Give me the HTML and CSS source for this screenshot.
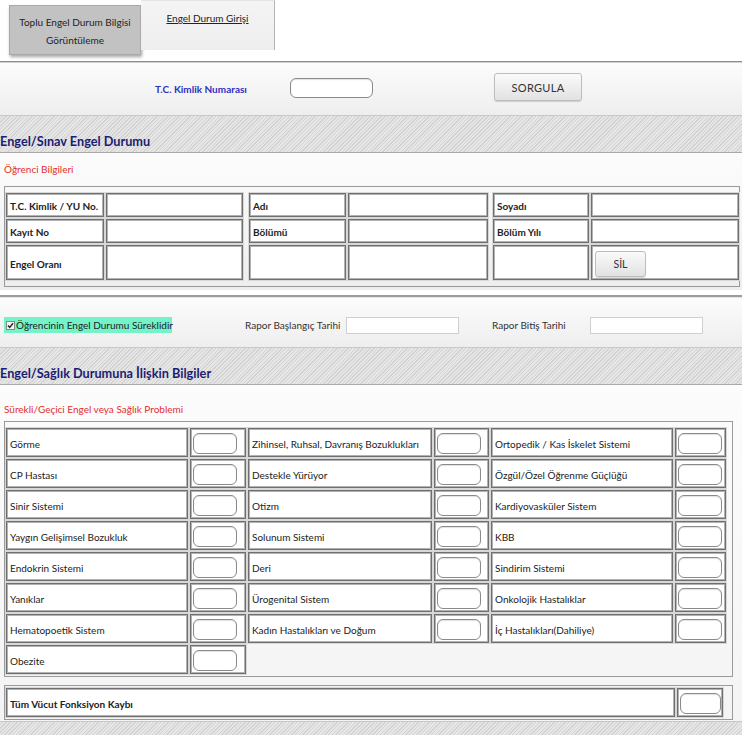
FILE: index.html
```html
<!DOCTYPE html>
<html lang="tr">
<head>
<meta charset="utf-8">
<title>Engel Durum Girişi</title>
<link rel="stylesheet" href="styles.css">
</head>
<body>
<div class="tabs">
  <div class="tab tab-a">Toplu Engel Durum Bilgisi<br>Görüntüleme</div>
  <div class="tab tab-b"><span class="ul">Engel Durum Girişi</span></div>
</div>

<div class="panel search">
  <span class="tc-label">T.C. Kimlik Numarası</span>
  <span class="round-input wide"></span>
  <span class="btn sorgula">SORGULA</span>
</div>

<div class="band"><h2>Engel/Sınav Engel Durumu</h2></div>

<div class="panel student">
  <div class="legend">Öğrenci Bilgileri</div>
  <div class="box">
    <div class="sgrid">
      <div class="c b">T.C. Kimlik / YU No.</div><div class="c"></div>
      <div class="c b g2">Adı</div><div class="c"></div>
      <div class="c b g3">Soyadı</div><div class="c"></div>
      <div class="c b">Kayıt No</div><div class="c"></div>
      <div class="c b g2">Bölümü</div><div class="c"></div>
      <div class="c b g3">Bölüm Yılı</div><div class="c"></div>
      <div class="c b">Engel Oranı</div><div class="c"></div>
      <div class="c g2"></div><div class="c"></div>
      <div class="c g3"></div><div class="c btn-cell"><span class="btn sil">SİL</span></div>
    </div>
  </div>
</div>

<div class="panel report">
  <span class="check-label"><svg class="chk" width="9" height="9" viewBox="0 0 9 9"><rect x="0.5" y="0.5" width="8" height="8" fill="#f4f4f4" stroke="#8a8a8a"/><path d="M2 4.6 L3.7 6.4 L7 2.3" fill="none" stroke="#222" stroke-width="1.4"/></svg>Öğrencinin Engel Durumu Süreklidir</span>
  <span class="rl rl1">Rapor Başlangıç Tarihi</span>
  <span class="date-input"></span>
  <span class="rl rl2">Rapor Bitiş Tarihi</span>
  <span class="date-input"></span>
</div>

<div class="band"><h2>Engel/Sağlık Durumuna İlişkin Bilgiler</h2></div>

<div class="panel health">
  <div class="legend">Sürekli/Geçici Engel veya Sağlık Problemi</div>
  <div class="box hbox">
    <div class="hgrid">
      <div class="c">Görme</div><div class="c"><span class="round-input"></span></div>
      <div class="c">Zihinsel, Ruhsal, Davranış Bozuklukları</div><div class="c"><span class="round-input"></span></div>
      <div class="c">Ortopedik / Kas İskelet Sistemi</div><div class="c"><span class="round-input"></span></div>

      <div class="c">CP Hastası</div><div class="c"><span class="round-input"></span></div>
      <div class="c">Destekle Yürüyor</div><div class="c"><span class="round-input"></span></div>
      <div class="c">Özgül/Özel Öğrenme Güçlüğü</div><div class="c"><span class="round-input"></span></div>

      <div class="c">Sinir Sistemi</div><div class="c"><span class="round-input"></span></div>
      <div class="c">Otizm</div><div class="c"><span class="round-input"></span></div>
      <div class="c">Kardiyovasküler Sistem</div><div class="c"><span class="round-input"></span></div>

      <div class="c">Yaygın Gelişimsel Bozukluk</div><div class="c"><span class="round-input"></span></div>
      <div class="c">Solunum Sistemi</div><div class="c"><span class="round-input"></span></div>
      <div class="c">KBB</div><div class="c"><span class="round-input"></span></div>

      <div class="c">Endokrin Sistemi</div><div class="c"><span class="round-input"></span></div>
      <div class="c">Deri</div><div class="c"><span class="round-input"></span></div>
      <div class="c">Sindirim Sistemi</div><div class="c"><span class="round-input"></span></div>

      <div class="c">Yanıklar</div><div class="c"><span class="round-input"></span></div>
      <div class="c">Ürogenital Sistem</div><div class="c"><span class="round-input"></span></div>
      <div class="c">Onkolojik Hastalıklar</div><div class="c"><span class="round-input"></span></div>

      <div class="c">Hematopoetik Sistem</div><div class="c"><span class="round-input"></span></div>
      <div class="c">Kadın Hastalıkları ve Doğum</div><div class="c"><span class="round-input"></span></div>
      <div class="c">İç Hastalıkları(Dahiliye)</div><div class="c"><span class="round-input"></span></div>

      <div class="c">Obezite</div><div class="c"><span class="round-input"></span></div>
    </div>
  </div>
  <div class="box tbox">
    <div class="tgrid">
      <div class="c b">Tüm Vücut Fonksiyon Kaybı</div><div class="c"><span class="round-input"></span></div>
    </div>
  </div>
</div>

<div class="band tail"></div>
</body>
</html>
```
FILE: styles.css
```css
* { box-sizing: border-box; }

body {
  margin: 0;
  width: 742px;
  background: #ffffff;
  font-family: Lato, "Open Sans", sans-serif;
  font-size: 10px;
  color: #222;
  overflow: hidden;
}

/* tabs */
.tabs {
  height: 62px;
  display: flex;
  align-items: flex-start;
  padding-left: 9px;
  border-bottom: 1px solid #8e8e8e;
  box-shadow: 0 1px 0 #d0d0d0;
}
.tab {
  text-align: center;
  font-size: 10px;
  line-height: 18px;
}
.tab-a {
  margin-top: 5px;
  width: 132px;
  height: 50px;
  padding-top: 7px;
  background: #c2c2c2;
  border: 1px solid #a9a9a9;
  box-shadow: 1px 2px 3px rgba(0,0,0,0.35);
}
.tab-b {
  width: 134px;
  height: 50px;
  padding-top: 8px;
  background: linear-gradient(#f4f4f4, #eeeeee);
  border-right: 1px solid #b5b5b5;
  border-top: 1px solid #e4e4e4;
}
.ul { text-decoration: underline; }

/* panels */
.panel {
  background: linear-gradient(#fcfcfc, #eeeeee);
}
.search {
  margin-top: 1px;
  height: 52px;
  display: flex;
  align-items: center;
  padding-left: 155px;
}
.tc-label {
  color: #2f2fc0;
  font-weight: bold;
  font-size: 10px;
  width: 135px;
}
.round-input {
  display: block;
  width: 44px;
  height: 21px;
  background: #fff;
  border: 1px solid #8a8a8a;
  border-radius: 6px;
  box-shadow: inset 0 1px 1px rgba(0,0,0,0.12);
}
.round-input.wide {
  width: 83px;
  height: 20px;
  margin-top: -2px;
}
.btn {
  display: flex;
  align-items: center;
  justify-content: center;
  background: linear-gradient(#fafafa, #e2e2e2);
  border: 1px solid #bdbdbd;
  border-radius: 3px;
  color: #333;
  box-shadow: 0 1px 1px rgba(0,0,0,0.15);
}
.sorgula {
  margin-left: 121px;
  width: 88px;
  height: 28px;
  font-size: 11px;
  letter-spacing: 0.3px;
  margin-top: -4px;
}

/* hatched bands */
.band {
  height: 38px;
  display: flex;
  align-items: flex-end;
  background: repeating-linear-gradient(135deg, #e6e6e6 0 1.6px, #d3d3d3 1.6px 2.6px);
  border-bottom: 1px solid #a8a8a8;
  border-top: 1px solid #c8c8c8;
}
.band h2 {
  margin: 0 0 3px 0;
  font-size: 12.7px;
  font-weight: bold;
  color: #1c1c72;
  line-height: 16px;
}
.band.tail { height: 14px; border-bottom: none; }

.legend {
  color: #e2302e;
  font-size: 10px;
  line-height: 14px;
  padding-left: 4px;
}

.box {
  margin-left: 4px;
  border: 1px solid #9a9a9a;
}

.c {
  border: 1px solid #6f6f6f;
  box-shadow: inset 0 0 0 1px #b2b2b2, 0 0 0 1px #d8d8d8;
  background: #fff;
  display: flex;
  align-items: center;
  padding-left: 3px;
  padding-top: 2px;
  overflow: hidden;
  white-space: nowrap;
}
.b { font-weight: bold; }

/* student */
.student {
  height: 137px;
  padding-top: 9px;
}
.student .box {
  margin-top: 10px;
  height: 101px;
  width: 736px;
}
.sgrid {
  display: grid;
  grid-template-columns: 98px 137px 101px 140px 99px 148px;
  grid-template-rows: 24px 24px 35px;
  gap: 2px;
  padding: 6px 0 0 1px;
}
.sgrid .g2 { margin-left: 4px; }
.sgrid .g3 { margin-left: 3px; }
.btn-cell { padding-left: 3px; padding-top: 0; }
.sil {
  width: 51px;
  height: 26px;
  font-size: 10.5px;
  margin-top: 2px;
}

/* report */
.report {
  margin-top: 5px;
  height: 52px;
  display: flex;
  align-items: center;
  padding-left: 4px;
  padding-top: 6px;
  border-top: 2px solid #9c9c9c;
  box-shadow: inset 0 1px 0 #e4e4e4;
}
.check-label {
  display: flex;
  align-items: center;
  gap: 1px;
  width: 168px;
  height: 16px;
  background: #74f2c8;
  padding-left: 2px;
  font-size: 10px;
  white-space: nowrap;
}
.chk { flex: none; }
.rl { font-size: 10px; color: #333; white-space: nowrap; }
.rl1 { margin-left: 73px; width: 101px; }
.rl2 { margin-left: 33px; width: 98px; }
.date-input {
  display: block;
  width: 113px;
  height: 17px;
  background: #fff;
  border: 1px solid #cfcfcf;
}

/* health */
.health {
  height: 336px;
  padding-top: 17px;
  background: linear-gradient(#fcfcfc, #f4f4f4);
}
.hbox {
  margin-top: 5px;
  width: 729px;
  height: 256px;
}
.hgrid {
  display: grid;
  grid-template-columns: 182px 56px 184px 55px 182px 51px;
  grid-auto-rows: 29px;
  gap: 2px;
  padding: 6px 0 0 1px;
}
.hgrid .c .round-input { margin-left: -1px; margin-top: -1px; }
.tbox {
  margin-top: 8px;
  width: 729px;
  height: 35px;
}
.tgrid {
  display: grid;
  grid-template-columns: 669px 46px;
  grid-template-rows: 29px;
  gap: 2px;
  padding: 2px 0 0 1px;
}
.tgrid .c .round-input { width: 41px; margin-left: -1px; }
```
